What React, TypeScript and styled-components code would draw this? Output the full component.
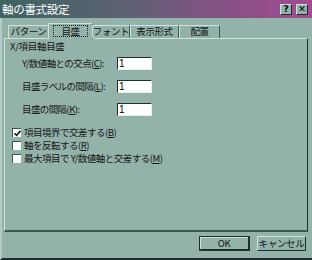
import React from "react";
import styled, { createGlobalStyle } from "styled-components";

const BG = "#93b2aa";
const LIGHT = "#cfe2dc";
const DARK = "#3b5954";
const DARKER = "#1e302d";
const FONT = `"Noto Sans CJK JP", "Noto Sans", sans-serif`;

const Global = createGlobalStyle`
  html, body { margin: 0; padding: 0; background: ${BG}; }
  body { font-family: ${FONT}; color: #141414; }
`;

const Window = styled.div`
  width: 312px;
  height: 260px;
  box-sizing: border-box;
  background: ${BG};
  border-left: 2px solid #b3ccc5;
  border-bottom: 2px solid ${DARKER};
  display: flex;
  flex-direction: column;
`;

const TitleBar = styled.div`
  height: 18px;
  margin-left: -2px;
  display: flex;
  align-items: center;
  padding: 0 4px 0 2px;
  background: linear-gradient(90deg, #3f6360 0%, #5d6274 40%, #8a4f86 75%, #a34c93 100%);
`;

const Title = styled.span`
  flex: 1;
  color: #ffffff;
  font-size: 11.5px;
  line-height: 14px;
  letter-spacing: -0.3px;
  white-space: nowrap;
`;

const TitleButton = styled.div<{ $gap?: number }>`
  width: 12px;
  height: 11px;
  box-sizing: border-box;
  margin-left: ${(p) => p.$gap ?? 0}px;
  background: ${BG};
  border-top: 1px solid ${LIGHT};
  border-left: 1px solid ${LIGHT};
  border-right: 1px solid ${DARKER};
  border-bottom: 1px solid ${DARKER};
  display: flex;
  align-items: center;
  justify-content: center;
  font-family: "DejaVu Sans", sans-serif;
  font-weight: bold;
  font-size: 9px;
  line-height: 9px;
  color: #000;
`;

const Body = styled.div`
  flex: 1;
  display: flex;
  flex-direction: column;
  padding: 5px 4px 0 2px;
`;

const TabStrip = styled.div`
  display: flex;
  align-items: flex-end;
  height: 15px;
  padding-left: 4px;
  position: relative;
  z-index: 1;
`;

const Tab = styled.div<{ $w: number; $active?: boolean }>`
  flex: none;
  width: ${(p) => p.$w}px;
  height: ${(p) => (p.$active ? 16 : 13)}px;
  box-sizing: border-box;
  margin-left: ${(p) => (p.$active ? -1 : 0)}px;
  margin-right: ${(p) => (p.$active ? -1 : 0)}px;
  margin-bottom: ${(p) => (p.$active ? -1 : 0)}px;
  padding-top: ${(p) => (p.$active ? 1 : 0)}px;
  background: ${BG};
  border-top: 1px solid ${LIGHT};
  border-left: 1px solid ${LIGHT};
  border-right: 1px solid ${DARK};
  display: flex;
  align-items: flex-start;
  justify-content: center;
  white-space: nowrap;
  font-size: 9.5px;
  line-height: 11px;
  letter-spacing: -0.4px;
`;

const Focus = styled.span`
  border: 1px dotted #202020;
  padding: 0 7px;
  line-height: 10px;
`;

const Panel = styled.div`
  height: 194px;
  box-sizing: border-box;
  border-top: 1px solid ${LIGHT};
  border-left: 1px solid ${LIGHT};
  border-right: 1px solid ${DARKER};
  border-bottom: 2px solid ${DARK};
  padding: 2px 0 0 5px;
  display: flex;
  flex-direction: column;
`;

const GroupTitle = styled.div`
  font-size: 9.5px;
  line-height: 11px;
  letter-spacing: -0.3px;
  margin-bottom: 5px;
  white-space: nowrap;
`;

const FieldRow = styled.div`
  display: flex;
  align-items: center;
  height: 13px;
  padding-left: 12px;
  margin-bottom: 10px;
`;

const Label = styled.span`
  width: 95px;
  font-size: 9.5px;
  line-height: 11px;
  letter-spacing: -0.6px;
  white-space: nowrap;
`;

const Input = styled.div`
  width: 35px;
  height: 13px;
  box-sizing: border-box;
  background: #ffffff;
  border-top: 1px solid ${DARKER};
  border-left: 1px solid ${DARKER};
  border-right: 1px solid #e8f0ee;
  border-bottom: 1px solid #e8f0ee;
  font-family: "Liberation Sans", sans-serif;
  font-size: 10px;
  line-height: 11px;
  padding-left: 1px;
  color: #000;
`;

const Checks = styled.div`
  display: flex;
  flex-direction: column;
  gap: 4px;
  margin-top: 2px;
  padding-left: 2px;
`;

const CheckRow = styled.div`
  display: flex;
  align-items: center;
  height: 9px;
  font-size: 9.5px;
  line-height: 11px;
  letter-spacing: -0.5px;
  white-space: nowrap;
`;

const Box = styled.div`
  width: 9px;
  height: 9px;
  box-sizing: border-box;
  background: #ffffff;
  border-top: 1px solid ${DARK};
  border-left: 1px solid ${DARK};
  margin-right: 3px;
  display: flex;
  align-items: center;
  justify-content: center;
`;

const Footer = styled.div`
  display: flex;
  justify-content: flex-end;
  gap: 7px;
  padding: 4px 2px 0 0;
`;

const Button = styled.div<{ $default?: boolean; $w: number }>`
  width: ${(p) => p.$w}px;
  height: 15px;
  box-sizing: border-box;
  background: ${BG};
  border-top: 1px solid ${(p) => (p.$default ? DARKER : LIGHT)};
  border-left: 1px solid ${(p) => (p.$default ? DARKER : LIGHT)};
  border-right: ${(p) => (p.$default ? 2 : 1)}px solid ${DARKER};
  border-bottom: ${(p) => (p.$default ? 2 : 1)}px solid ${DARKER};
  box-shadow: ${(p) => (p.$default ? `inset 1px 1px 0 ${LIGHT}` : "none")};
  display: flex;
  align-items: center;
  justify-content: center;
  font-size: 9.5px;
  line-height: 11px;
  letter-spacing: -0.3px;
  white-space: nowrap;
`;

const U = styled.span`
  text-decoration: underline;
`;

const Check = () => (
  <svg width="7" height="7" viewBox="0 0 7 7">
    <path d="M0.5 3.2 L2.6 5.4 L6.5 0.8" stroke="#111" strokeWidth="1.6" fill="none" />
  </svg>
);

export default function App() {
  return (
    <>
      <Global />
      <Window>
        <TitleBar>
          <Title>軸の書式設定</Title>
          <TitleButton>?</TitleButton>
          <TitleButton $gap={4}>✕</TitleButton>
        </TitleBar>
        <Body>
          <TabStrip>
            <Tab $w={41}>パターン</Tab>
            <Tab $w={45} $active>
              <Focus>目盛</Focus>
            </Tab>
            <Tab $w={38}>フォント</Tab>
            <Tab $w={49}>表示形式</Tab>
            <Tab $w={41}>配置</Tab>
          </TabStrip>
          <Panel>
            <GroupTitle>X/項目軸目盛</GroupTitle>
            <FieldRow>
              <Label>
                Y/数値軸との交点(<U>C</U>):
              </Label>
              <Input>1</Input>
            </FieldRow>
            <FieldRow>
              <Label>
                目盛ラベルの間隔(<U>L</U>):
              </Label>
              <Input>1</Input>
            </FieldRow>
            <FieldRow>
              <Label>
                目盛の間隔(<U>K</U>):
              </Label>
              <Input>1</Input>
            </FieldRow>
            <Checks>
              <CheckRow>
                <Box>
                  <Check />
                </Box>
                項目境界で交差する(<U>B</U>)
              </CheckRow>
              <CheckRow>
                <Box />
                軸を反転する(<U>R</U>)
              </CheckRow>
              <CheckRow>
                <Box />
                最大項目で Y/数値軸と交差する(<U>M</U>)
              </CheckRow>
            </Checks>
          </Panel>
          <Footer>
            <Button $w={51} $default>
              OK
            </Button>
            <Button $w={49}>キャンセル</Button>
          </Footer>
        </Body>
      </Window>
    </>
  );
}
